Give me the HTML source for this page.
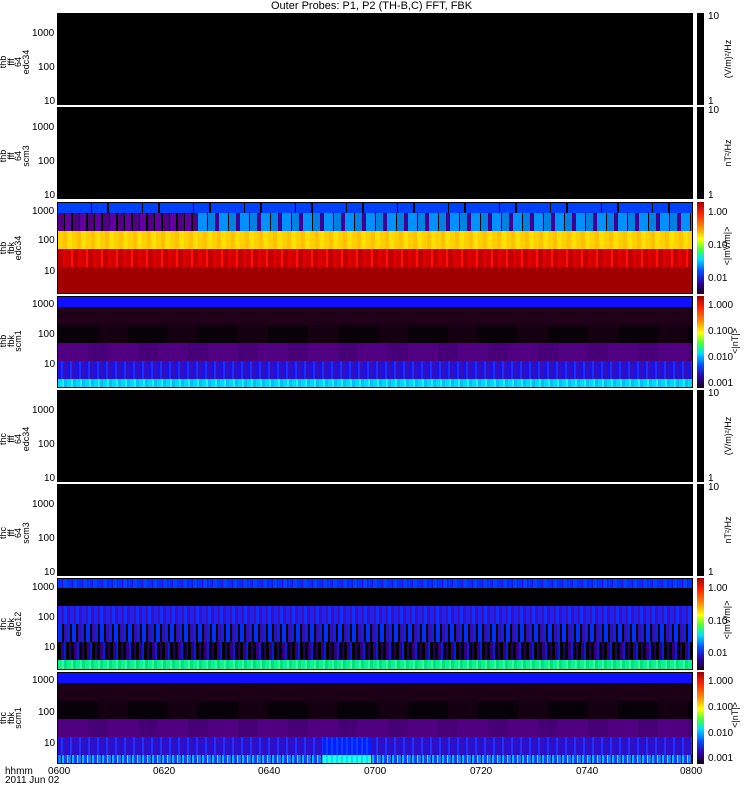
<!DOCTYPE html>
<html><head><meta charset="utf-8"><style>
body{margin:0;width:750px;height:800px;background:#fff;position:relative;overflow:hidden;font-family:"Liberation Sans",sans-serif;font-size:10px;color:#000}
.p{position:absolute;left:57px;width:636px;height:92px;background:#000;overflow:hidden;box-sizing:border-box;border:1px solid #000}
.b{position:absolute;left:0;width:100%}
.cb{position:absolute;left:697px;width:7px;height:92px;background:#000}
.rb{background:linear-gradient(to bottom,#a00000 0%,#ff2000 12%,#ff9000 28%,#ffff00 40%,#40ff40 52%,#00e0ff 62%,#0050ff 75%,#3000a0 88%,#100010 100%)}
.t{position:absolute;font-size:10px;line-height:10px;white-space:nowrap}
.lab{position:absolute;left:-4px;width:40px;height:32px;text-align:center;font-size:9px;line-height:7.5px;transform:rotate(-90deg);transform-origin:center}
.rl{position:absolute;left:690px;width:80px;height:10px;text-align:center;font-size:9px;line-height:10px;transform:rotate(-90deg);transform-origin:center;white-space:nowrap}
</style></head><body>
<div class="t" style="left:271px;top:1px;font-size:11px">Outer Probes: P1, P2 (TH-B,C) FFT, FBK</div>

<!-- panel 1 -->
<div class="p" style="top:13px"></div>
<div class="cb" style="top:13px"></div>
<div class="t" style="left:708px;top:12px">10</div><div class="t" style="left:708px;top:97px">1</div>
<div class="rl" style="top:54px;left:688px">(V/m)²/Hz</div>
<div class="t" style="left:32px;top:29px">1000</div><div class="t" style="left:38px;top:63px">100</div><div class="t" style="left:44px;top:97px">10</div>
<div class="lab" style="top:46px">thb<br>fff<br>64<br>edc34</div>

<!-- panel 2 -->
<div class="p" style="top:107px"></div>
<div class="cb" style="top:107px"></div>
<div class="t" style="left:708px;top:106px">10</div><div class="t" style="left:708px;top:191px">1</div>
<div class="rl" style="top:148px;left:688px">nT²/Hz</div>
<div class="t" style="left:32px;top:123px">1000</div><div class="t" style="left:38px;top:157px">100</div><div class="t" style="left:44px;top:191px">10</div>
<div class="lab" style="top:140px">thb<br>fff<br>64<br>scm3</div>

<!-- panel 3 -->
<div class="p" style="top:202px">
<div class="b" style="top:0;height:10px;background:repeating-linear-gradient(90deg,#0040ff 0 33px,#000 33px 34px,#0040ff 34px 49px,#000 49px 51px)"></div>
<div class="b" style="top:10px;height:18px;background:repeating-linear-gradient(90deg,#500080 0 6px,#000 6px 7px,#6000a0 7px 13px,#000 13px 15px),linear-gradient(#500080,#500080)"></div>
<div class="b" style="top:10px;left:140px;width:496px;height:18px;background:repeating-linear-gradient(90deg,#0090ff 0 9px,#000 9px 10px,#0080e0 10px 17px,#400090 17px 21px)"></div>
<div class="b" style="top:28px;height:18px;background:repeating-linear-gradient(90deg,#ffd000 0 5px,#ffc000 5px 9px,#ffe000 9px 14px),linear-gradient(90deg,#ffc800,#ffff00)"></div>
<div class="b" style="top:46px;height:18px;background:repeating-linear-gradient(90deg,#c00000 0 5px,#e00000 5px 8px,#d00000 8px 13px,#ff1000 13px 15px)"></div>
<div class="b" style="top:64px;height:28px;background:#a00000"></div>
</div>
<div class="cb rb" style="top:202px"></div>
<div class="t" style="left:708px;top:208px">1.00</div><div class="t" style="left:708px;top:241px">0.10</div><div class="t" style="left:708px;top:274px">0.01</div>
<div class="rl" style="top:241px;left:687px">&lt;|mV/m|&gt;</div>
<div class="t" style="left:32px;top:207px">1000</div><div class="t" style="left:38px;top:236px">100</div><div class="t" style="left:44px;top:267px">10</div>
<div class="lab" style="top:232px">thb<br>fbk<br>edc34</div>

<!-- panel 4 -->
<div class="p" style="top:296px">
<div class="b" style="top:0;height:10px;background:#1010ff"></div>
<div class="b" style="top:10px;height:18px;background:#200018"></div>
<div class="b" style="top:28px;height:18px;background:repeating-linear-gradient(90deg,#0a000a 0 40px,#150012 40px 70px)"></div>
<div class="b" style="top:46px;height:18px;background:repeating-linear-gradient(90deg,#500080 0 30px,#480078 30px 50px)"></div>
<div class="b" style="top:64px;height:18px;background:repeating-linear-gradient(90deg,#2010e0 0 3px,#1830ff 3px 5px,#3010c0 5px 9px)"></div>
<div class="b" style="top:82px;height:10px;background:repeating-linear-gradient(90deg,#00d8ff 0 4px,#20f0ff 4px 6px,#00c0f0 6px 9px)"></div>
</div>
<div class="cb rb" style="top:296px"></div>
<div class="t" style="left:708px;top:301px">1.000</div><div class="t" style="left:708px;top:327px">0.100</div><div class="t" style="left:708px;top:353px">0.010</div><div class="t" style="left:708px;top:379px">0.001</div>
<div class="rl" style="top:336px;left:695px">&lt;|nT|&gt;</div>
<div class="t" style="left:32px;top:300px">1000</div><div class="t" style="left:38px;top:330px">100</div><div class="t" style="left:44px;top:360px">10</div>
<div class="lab" style="top:325px">thb<br>fbk<br>scm1</div>

<!-- panel 5 -->
<div class="p" style="top:390px"></div>
<div class="cb" style="top:390px"></div>
<div class="t" style="left:708px;top:389px">10</div><div class="t" style="left:708px;top:474px">1</div>
<div class="rl" style="top:431px;left:688px">(V/m)²/Hz</div>
<div class="t" style="left:32px;top:406px">1000</div><div class="t" style="left:38px;top:440px">100</div><div class="t" style="left:44px;top:474px">10</div>
<div class="lab" style="top:423px">thc<br>fff<br>64<br>edc34</div>

<!-- panel 6 -->
<div class="p" style="top:484px"></div>
<div class="cb" style="top:484px"></div>
<div class="t" style="left:708px;top:483px">10</div><div class="t" style="left:708px;top:568px">1</div>
<div class="rl" style="top:525px;left:688px">nT²/Hz</div>
<div class="t" style="left:32px;top:500px">1000</div><div class="t" style="left:38px;top:534px">100</div><div class="t" style="left:44px;top:568px">10</div>
<div class="lab" style="top:517px">thc<br>fff<br>64<br>scm3</div>

<!-- panel 7 -->
<div class="p" style="top:578px">
<div class="b" style="top:0;height:9px;background:repeating-linear-gradient(90deg,#0030ff 0 4px,#2010d0 4px 5px,#0040ff 5px 9px,#4010a0 9px 10px)"></div>
<div class="b" style="top:9px;height:18px;background:#000"></div>
<div class="b" style="top:27px;height:18px;background:repeating-linear-gradient(90deg,#2020f0 0 4px,#4010b0 4px 6px,#1030ff 6px 9px,#3a10c0 9px 12px)"></div>
<div class="b" style="top:45px;height:18px;background:repeating-linear-gradient(90deg,#0030ff 0 4px,#000 4px 6px,#3010b0 6px 9px,#1020e0 9px 12px,#000 12px 14px)"></div>
<div class="b" style="top:63px;height:18px;background:repeating-linear-gradient(90deg,#000 0 3px,#300080 3px 6px,#0020e0 6px 8px,#000 8px 11px,#200060 11px 13px)"></div>
<div class="b" style="top:81px;height:11px;background:repeating-linear-gradient(90deg,#10f090 0 4px,#30ffa0 4px 6px,#00e080 6px 9px)"></div>
</div>
<div class="cb rb" style="top:578px"></div>
<div class="t" style="left:708px;top:584px">1.00</div><div class="t" style="left:708px;top:617px">0.10</div><div class="t" style="left:708px;top:649px">0.01</div>
<div class="rl" style="top:615px;left:687px">&lt;|mV/m|&gt;</div>
<div class="t" style="left:32px;top:583px">1000</div><div class="t" style="left:38px;top:613px">100</div><div class="t" style="left:44px;top:643px">10</div>
<div class="lab" style="top:608px">thc<br>fbk<br>edc12</div>

<!-- panel 8 -->
<div class="p" style="top:672px">
<div class="b" style="top:0;height:10px;background:#1010ff"></div>
<div class="b" style="top:10px;height:18px;background:#1c0016"></div>
<div class="b" style="top:28px;height:18px;background:repeating-linear-gradient(90deg,#080008 0 40px,#140010 40px 70px)"></div>
<div class="b" style="top:46px;height:18px;background:repeating-linear-gradient(90deg,#500080 0 30px,#480078 30px 50px)"></div>
<div class="b" style="top:64px;height:18px;background:repeating-linear-gradient(90deg,#2810d0 0 3px,#2030ff 3px 5px,#3010c0 5px 9px)"></div>
<div class="b" style="top:82px;height:10px;background:repeating-linear-gradient(90deg,#0080ff 0 3px,#000 3px 4px,#00c0ff 4px 6px,#1040ff 6px 9px,#30ffff 9px 10px)"></div>
<div class="b" style="top:64px;left:265px;width:48px;height:18px;background:repeating-linear-gradient(90deg,#0020ff 0 3px,#1040ff 3px 5px)"></div>
<div class="b" style="top:82px;left:265px;width:48px;height:10px;background:repeating-linear-gradient(90deg,#20ffe0 0 3px,#00e0ff 3px 5px)"></div>
</div>
<div class="cb rb" style="top:672px"></div>
<div class="t" style="left:708px;top:677px">1.000</div><div class="t" style="left:708px;top:703px">0.100</div><div class="t" style="left:708px;top:729px">0.010</div><div class="t" style="left:708px;top:754px">0.001</div>
<div class="rl" style="top:710px;left:695px">&lt;|nT|&gt;</div>
<div class="t" style="left:32px;top:676px">1000</div><div class="t" style="left:38px;top:708px">100</div><div class="t" style="left:44px;top:739px">10</div>
<div class="lab" style="top:702px">thc<br>fbk<br>scm1</div>

<!-- x axis -->
<div class="t" style="left:48px;top:767px">0600</div>
<div class="t" style="left:153px;top:767px">0620</div>
<div class="t" style="left:258px;top:767px">0640</div>
<div class="t" style="left:364px;top:767px">0700</div>
<div class="t" style="left:470px;top:767px">0720</div>
<div class="t" style="left:576px;top:767px">0740</div>
<div class="t" style="left:680px;top:767px">0800</div>
<div class="t" style="left:5px;top:767px">hhmm</div>
<div class="t" style="left:5px;top:776px">2011 Jun 02</div>
</body></html>
